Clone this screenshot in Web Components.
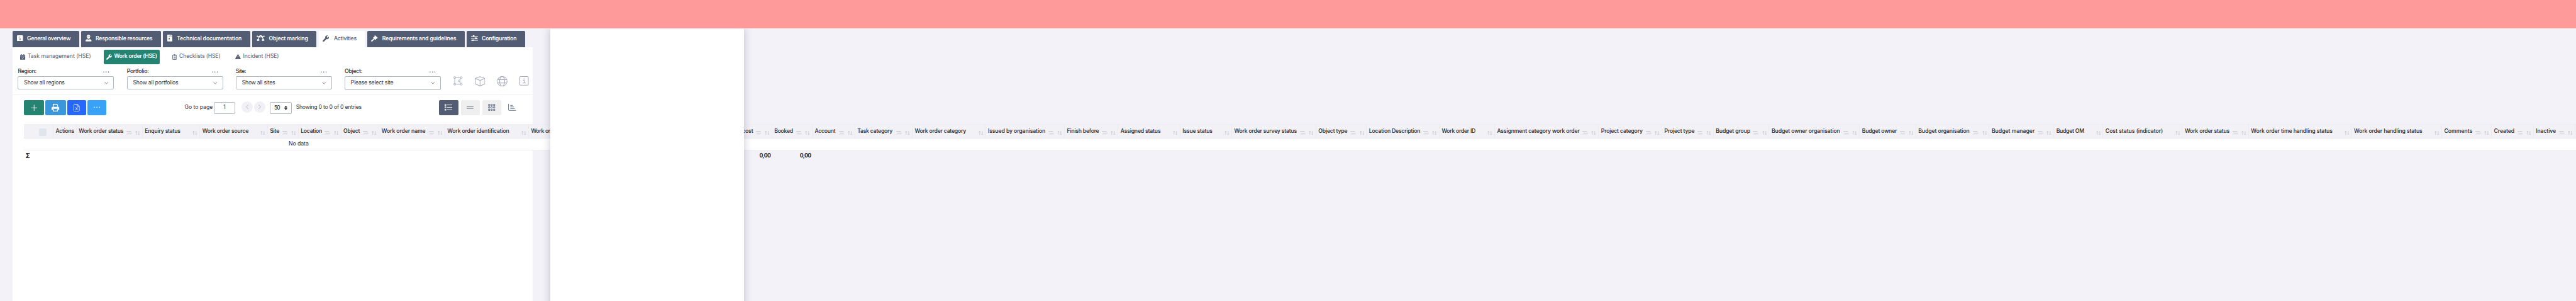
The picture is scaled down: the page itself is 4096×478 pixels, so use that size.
<!DOCTYPE html>
<html lang="en">
<head>
<meta charset="utf-8">
<title>Activities – Work order (HSE)</title>
<style>
html,body{margin:0;padding:0;background:#f3f2f8;overflow:hidden}
body{font-family:Inter,"Open Sans",sans-serif;height:478px;width:4096px}
</style>
</head>
<body>
<work-app></work-app>
<script>
const FONT = 'Inter, "Open Sans", sans-serif';
const ctx = document.createElement('canvas').getContext('2d');

/* Text set to an exact width by tracking. */
class FitText extends HTMLElement {
  connectedCallback() {
    const w = +this.getAttribute('w'), s = +(this.getAttribute('s') || 12.8), wt = this.getAttribute('wt') || 400;
    const t = this.textContent;
    ctx.font = `${wt} ${s}px ${FONT}`;
    const ls = (w - ctx.measureText(t).width) / t.length;
    this.attachShadow({mode: 'open'}).innerHTML =
      `<style>:host{display:block;flex:none;width:${w}px;white-space:nowrap;line-height:20px;font:${wt} ${s}px/20px ${FONT};letter-spacing:${ls.toFixed(3)}px}</style><slot></slot>`;
  }
}

const ICONS = {
  info: ['0 0 14 14', '<rect width="14" height="14" rx="2" fill="currentColor"/><path d="M5.6 6h1.8v4M5.3 10.2h3.6" stroke="#525c72" stroke-width="1.2" fill="none"/><circle cx="7" cy="3.7" r=".9" fill="#525c72"/>'],
  worker: ['0 0 14 16', '<path fill="currentColor" d="M3 4.2C3 2 4.5.6 5.6.5L6 2.6 6.3 0h1.4L8 2.6 8.4.5C9.600.6 11 2 11 4.200h.6v1H2.400v-1zM3.500 6h7c0 2.500-1.500 4-3.500 4S3.500 8.500 3.500 6zM4 10.600l3 1.200 3-1.200c2.500.3 4 2 4 4.400 0 .6-.3 1-1 1H1c-.7 0-1-.4-1-1 0-2.400 1.500-4.100 4-4.400z"/>'],
  zip: ['0 0 13 16', '<path fill="currentColor" d="M1.500 0H8v4.500h5v10c0 1-.5 1.500-1.500 1.500h-10C.5 16 0 15.500 0 14.500v-13C0 .5.500 0 1.500 0zM9 0l4 3.700H9z"/><path d="M4.500 1v6" stroke="#525c72" stroke-width="1.600" stroke-dasharray="1 1"/><rect x="3.300" y="7.500" width="2.400" height="5" rx="1.200" fill="#525c72"/><circle cx="4.500" cy="11" r=".8" fill="#fff"/>'],
  bezier: ['0 0 19 14', '<g fill="none" stroke="currentColor" stroke-width="1.700"><rect x="7.600" y=".9" width="3.800" height="3.200" rx=".6"/><rect x="1.900" y="9.700" width="3.600" height="3.400" rx=".6"/><rect x="13.500" y="9.700" width="3.600" height="3.400" rx=".6"/><path d="M2 2.300h5.600M11.400 2.300H17M7.600 3.300C5 4.400 3.700 6.500 3.700 9.700M11.400 3.300c2.600 1.100 3.900 3.200 3.900 6.400"/></g><circle cx="1.700" cy="2.300" r="1.600" fill="currentColor"/><circle cx="17.300" cy="2.300" r="1.600" fill="currentColor"/>'],
  wrench: ['0 0 512 512', '<path fill="currentColor" d="M507 116c-2-9-13-12-20-5l-74 74-68-11-11-68 74-74c7-7 4-18-6-20-52-13-110 1-151 42-43 43-55 106-37 161L19 410c-25 25-25 66 0 91s66 25 91 0l194-194c55 19 118 7 162-37 41-41 55-101 41-154z"/>'],
  gavel: ['0 0 16 16', '<path fill="currentColor" d="M8.200.6 9.200 0l6.600 6.300-.8 1.200-1-.1-2.800 2.800.2 1-1.100.8-2.400-2.300-5 5.600c-.6.7-1.400.7-2 .1l-.4-.4c-.5-.6-.5-1.300.1-1.900l5.600-5L4.600 6.300l.7-1.100h1L8.700 2z"/>'],
  sliders: ['0 0 16 14', '<g stroke="currentColor" stroke-width="1.700" fill="#525c72"><path d="M0 2.200h16M0 7h16M0 11.800h16"/><circle cx="6" cy="2.200" r="1.500"/><circle cx="11.300" cy="7" r="1.500"/><circle cx="5" cy="11.800" r="1.500"/></g>'],
  calendar: ['0 0 12 13', '<path fill="currentColor" d="M2.500 0h1.600v1.500h3.800V0h1.600v1.500H11c.7 0 1 .4 1 1V4H0V2.500c0-.6.300-1 1-1h1.500zM0 4.800h12V12c0 .6-.3 1-1 1H1c-.7 0-1-.4-1-1z"/><path d="m3.600 8.700 1.800 1.700 3.200-3.300" stroke="#fff" stroke-width="1.200" fill="none"/>'],
  clip: ['0 0 10 13', '<rect x=".6" y="1.800" width="8.800" height="10.600" rx="1" fill="none" stroke="currentColor" stroke-width="1.200"/><path fill="currentColor" d="M2.600 1.400h1.200a1.200 1.200 0 0 1 2.400 0h1.200v2.200H2.600z"/><path d="M2.300 6h1M4.300 6h3.500M2.300 8.200h1M4.300 8.200h3.500M2.300 10.400h1M4.300 10.400h3.500" stroke="currentColor"/>'],
  warn: ['0 0 13 12', '<path fill="currentColor" d="M5.600.6c.4-.8 1.400-.8 1.800 0l5.400 9.700c.4.800 0 1.700-.9 1.700H1.100c-.9 0-1.300-.9-.9-1.700z"/><path d="M6.500 3.500v4" stroke="#fff" stroke-width="1.300"/><circle cx="6.500" cy="9.500" r=".8" fill="#fff"/>'],
  dots: ['0 0 14 4', '<g fill="currentColor"><circle cx="1.400" cy="2" r="1.150"/><circle cx="7" cy="2" r="1.150"/><circle cx="12.600" cy="2" r="1.150"/></g>'],
  down: ['0 0 10 6', '<path d="m.8.8 4.200 4.200L9.200.8" fill="none" stroke="currentColor"/>'],
  poly: ['0 0 22 22', '<g fill="none" stroke="currentColor" stroke-width="1.400"><circle cx="3.200" cy="3.300" r="2.300"/><circle cx="18.800" cy="3.300" r="2.300"/><circle cx="3.200" cy="18.700" r="2.300"/><circle cx="18.800" cy="18.700" r="2.300"/><circle cx="14" cy="11" r="2.100"/><path d="M5.500 3.300h11M5.500 18.700h11M3.200 5.600v10.800M17.600 5.200 15 9M17.600 16.800 15 13"/></g>'],
  cube: ['0 0 25 24', '<g fill="none" stroke="currentColor" stroke-width="1.500" stroke-linejoin="round"><path d="M12.500 1 24 5.200v13L12.500 23 1 18.200v-13zM1 5.200 12.500 10 24 5.200M12.500 10v13"/></g>'],
  globe: ['0 0 25 24', '<g fill="none" stroke="currentColor" stroke-width="1.500"><ellipse cx="12.500" cy="12" rx="11.600" ry="11.200"/><ellipse cx="12.500" cy="12" rx="6" ry="11.200"/><path d="M2 8h21M2 16h21"/></g>'],
  infobox: ['0 0 22 22', '<g fill="none" stroke="currentColor" stroke-width="1.500"><rect x=".8" y=".8" width="20.400" height="20.400" rx="2"/><path d="M8.500 9.500h2.900v6.300M7.800 16h7"/></g><circle cx="11" cy="6.500" r="1.300" fill="currentColor"/>'],
  plus: ['0 0 16 16', '<path d="M8 .5v15M.5 8h15" stroke="currentColor" stroke-width="1.300"/>'],
  print: ['0 0 18 18', '<path d="M4 7V1h8.500L14 2.800V7" fill="none" stroke="currentColor" stroke-width="2"/><path fill="currentColor" d="M2.500 7h13c1.600 0 2.500 1 2.500 2.500V14h-3v-2.500H3V14H0V9.500C0 8 .9 7 2.500 7z"/><path d="M4 12v5h10v-5" fill="none" stroke="currentColor" stroke-width="2"/>'],
  xls: ['0 0 14 18', '<path d="M2.500.7H9l4.300 4.500v10.300c0 1.200-.6 1.800-1.800 1.800h-9C1.300 17.300.7 16.700.7 15.500v-13C.7 1.300 1.300.7 2.500.7zM8.700.7v4.800h4.600M4.700 8l4.600 6.500M9.300 8l-4.600 6.500" fill="none" stroke="currentColor" stroke-width="1.300"/>'],
  prev: ['0 0 6 11', '<path d="M5.300.7.800 5.500l4.500 4.800" fill="none" stroke="currentColor"/>'],
  next: ['0 0 6 11', '<path d="m.7.700 4.500 4.800-4.500 4.800" fill="none" stroke="currentColor"/>'],
  updown: ['0 0 8 10', '<path d="m0 4.200L4 0l4 4.200zM0 5.800 4 10l4-4.200z" fill="currentColor"/>'],
  list: ['0 0 18 16', '<g fill="none" stroke="currentColor" stroke-width="1.300"><path d="M5.500 2.400H18M5.500 8H18M5.500 13.600H18"/><rect x=".7" y="1.200" width="2.300" height="2.300"/><rect x=".7" y="6.900" width="2.300" height="2.300"/><rect x=".7" y="12.500" width="2.300" height="2.300"/></g>'],
  equal: ['0 0 16 7', '<path d="M0 1h16M0 6h16" stroke="currentColor" stroke-width="1.200"/>'],
  grid: ['0 0 17 16', '<g fill="none" stroke="currentColor" stroke-width="1.400">' + [1, 6.9, 12.8].map(x => [.8, 6.4, 12].map(y => `<rect x="${x}" y="${y}" width="3.200" height="3.200" rx=".8"/>`).join('')).join('') + '</g>'],
  chart: ['0 0 19 16', '<path d="M.8 0v13.500c0 1.200.5 1.700 1.700 1.700H19M5 3.400h6.500M5 7h8.500M5 10.800h11" fill="none" stroke="currentColor" stroke-width="1.200"/>'],
  filter: ['0 0 13 11', '<path d="M0 .8h11M2 5.500h11M0 10.200h12" stroke="currentColor" stroke-width="1.100"/>'],
  sort: ['0 0 11 11', '<path d="M2.700 11V.7M.4 3 2.700.6 5 3M8.600 0v10.300M6.300 8l2.300 2.400L10.900 8" fill="none" stroke="currentColor" stroke-width="1"/>']
};

class UiIcon extends HTMLElement {
  connectedCallback() {
    const [box, art] = ICONS[this.getAttribute('n')];
    const w = this.getAttribute('w'), h = this.getAttribute('h');
    this.attachShadow({mode: 'open'}).innerHTML =
      `<style>:host{display:block;flex:none;width:${w}px;height:${h}px}svg{display:block;width:100%;height:100%}</style><svg viewBox="${box}" preserveAspectRatio="none">${art}</svg>`;
  }
}

class MainTabs extends HTMLElement {
  connectedCallback() {
    const tabs = [['General overview','info',14,14,156,102.2,10,9.6],['Responsible resources','worker',14,16,187,133.5,10,9.7],['Technical documentation','zip',13,16,204.5,152.3,9.5,10],['Object marking','bezier',19,14,151,92.3,10,10],['Activities','wrench',15,15,109,53.2,10,11],['Requirements and guidelines','gavel',16,15,229,174,10,9.5],['Configuration','sliders',16,14,137.500,82,10,9.5]];
    this.attachShadow({mode: 'open'}).innerHTML = `<style>
      :host{display:flex;gap:4.700px;height:38px;padding:5px 0 0 30px}
      div{display:flex;align-items:center;height:38px;box-sizing:border-box;background:#525c72;color:#fff;border-radius:3px 3px 0 0}
      div.on{background:#fff;color:#525c72}
      ui-icon{margin-bottom:3px}
    </style>` + tabs.map(t => `<div class="${t[0] == 'Activities' ? 'on' : ''}" style="width:${t[4]}px;padding-left:${t[6]}px;gap:${t[7]}px"><ui-icon n="${t[1]}" w="${t[2]}" h="${t[3]}"></ui-icon><fit-text w="${t[5]}" wt="${t[0] == 'Activities' ? 500 : 600}">${t[0]}</fit-text></div>`).join('');
  }
}

class SubTabs extends HTMLElement {
  connectedCallback() {
    this.attachShadow({mode: 'open'}).innerHTML = `<style>
      :host{display:flex;padding:6px 0 0 13.300px;height:34px;color:#525c72}
      div{display:flex;align-items:center;height:34px;box-sizing:border-box;border-radius:3px;padding-left:4.500px;gap:5px}
      .on{background:#258372;color:#fff;padding-left:6.500px}
    </style>
    <div style="width:200px"><ui-icon n="calendar" w="12" h="13"></ui-icon><fit-text w="149">Task management (HSE)</fit-text></div>
    <div class="on" style="width:132px"><ui-icon n="wrench" w="13" h="13"></ui-icon><fit-text w="100.600" wt="600">Work order (HSE)</fit-text></div>
    <div style="width:172.500px;padding-left:29px;gap:5.700px;box-sizing:border-box"><ui-icon n="clip" w="10.600" h="13"></ui-icon><fit-text w="96.500">Checklists (HSE)</fit-text></div>
    <div><ui-icon n="warn" w="13" h="12"></ui-icon><fit-text w="84">Incident (HSE)</fit-text></div>`;
  }
}

class FilterBox extends HTMLElement {
  connectedCallback() {
    const a = n => this.getAttribute(n);
    this.attachShadow({mode: 'open'}).innerHTML = `<style>
      :host{display:block;width:225.500px;color:#30343c}
      .l,.b{display:flex;justify-content:space-between;align-items:center}
      .l{height:20px;padding-right:12px;margin-bottom:1px;color:#24282e}
      .l ui-icon{color:#525c72;margin-top:2px}
      .b{height:${a('h') || 31}px;box-sizing:border-box;border:1px solid #b1b8c6;border-radius:3px;padding:0 12px 0 13px}
      .b fit-text{margin-top:${a('h') ? 0 : 1}px}
    </style><div class="l"><fit-text w="${a('lw')}" wt="500">${a('label')}</fit-text><ui-icon n="dots" w="14" h="4"></ui-icon></div>
    <div class="b"><fit-text w="${a('vw')}">${a('value')}</fit-text><ui-icon n="down" w="9.500" h="5.500"></ui-icon></div>`;
  }
}

class FilterBar extends HTMLElement {
  connectedCallback() {
    this.attachShadow({mode: 'open'}).innerHTML = `<style>
      :host{display:flex;gap:30px;height:73px;box-sizing:border-box;padding:8px 0 0 12px;border-bottom:1.500px solid #f3f2f6}
      .i{display:flex;align-items:center;color:#a9a9c0;height:24px;margin-top:20px;gap:28px}
    </style>
    <filter-box label="Region:" lw="43.500" value="Show all regions" vw="95.300"></filter-box>
    <filter-box label="Portfolio:" lw="51.500" value="Show all portfolios" vw="106.500"></filter-box>
    <filter-box label="Site:" lw="24.400" value="Show all sites" vw="78"></filter-box>
    <filter-box label="Object:" lw="41.700" value="Please select site" vw="100" h="32"></filter-box>
    <div class="i"><ui-icon n="poly" w="21.500" h="22"></ui-icon><ui-icon n="cube" w="24.500" h="24"></ui-icon><ui-icon n="globe" w="25" h="24"></ui-icon><ui-icon n="infobox" w="21.500" h="22"></ui-icon></div>`;
  }
}

class ToolBar extends HTMLElement {
  connectedCallback() {
    this.attachShadow({mode: 'open'}).innerHTML = `<style>
      :host{display:flex;height:68px;box-sizing:border-box;padding:11px 0 0 26px;color:#30343c}
      .r{display:flex;height:36px;align-items:center}
      .b{display:flex;align-items:center;justify-content:center;height:36px;border-radius:3px;color:#fff}
      .a{gap:2.700px;width:377px}
      .box{display:flex;align-items:center;justify-content:center;box-sizing:border-box;border:1px solid #b1b8c6;border-radius:3px;height:28px}
      .c{display:flex;align-items:center;justify-content:center;width:26.500px;height:26.500px;border-radius:50%;background:#f1f0f6;color:#9c9cab;margin-right:3.500px;margin-top:-1px}
      .g{background:#efeff0;color:#525c72}
      .c ui-icon{margin-top:-3px}
    </style>
    <div class="r a"><div class="b" style="width:47px;background:#258372"><ui-icon n="plus" w="15.500" h="15.500"></ui-icon></div>
      <div class="b" style="width:49.500px;background:#3a97db"><ui-icon n="print" w="18" h="18"></ui-icon></div>
      <div class="b" style="width:44.700px;background:#2667ff"><ui-icon n="xls" w="14" h="18"></ui-icon></div>
      <div class="b" style="width:44px;background:#38a1f8"><ui-icon n="dots" w="15" h="4"></ui-icon></div></div>
    <div class="r" style="width:596px"><fit-text w="66">Go to page</fit-text>
      <div class="box" style="width:50px;margin:2px 14.500px 0 3px;padding-bottom:3px"><fit-text w="6" s="12.500">1</fit-text></div>
      <div class="c"><ui-icon n="prev" w="6" h="11"></ui-icon></div><div class="c"><ui-icon n="next" w="6" h="11"></ui-icon></div>
      <div class="box" style="width:51px;margin:3px 10px 0 7px;gap:11px;color:#222"><fit-text w="13" s="12.500">50</fit-text><ui-icon n="updown" w="7.500" h="10"></ui-icon></div>
      <fit-text w="154">Showing 0 to 0 of 0 entries</fit-text></div>
    <div class="r"><div class="b" style="width:46.300px;background:#525c72"><ui-icon n="list" w="18" h="16"></ui-icon></div>
      <div class="b g" style="width:44px;margin:0 6px"><ui-icon n="equal" w="16" h="6.500"></ui-icon></div>
      <div class="b g" style="width:44px;margin-right:17px"><ui-icon n="grid" w="17" h="16.500"></ui-icon></div>
      <ui-icon n="chart" w="18.500" h="16" style="color:#525c72"></ui-icon></div>`;
  }
}

class DataTable extends HTMLElement {
  connectedCallback() {
    /* label, text width, right edge of the column, has a filter icon */
    const cols = [['Work order status',104.8,334.6,1],['Enquiry status',83.5,469.3,0],['Work order source',108.6,628,0],['Site',22,700.2,1],['Location',50,800.4,1],['Object',38.7,890,1],['Work order name',103.1,1044,1],['Work order identification',145.6,1240.6,0],['Work order type',92,1400,1],['',0,1735.8,0],['cost',25.6,1811.2,1],['Booked',43.6,1905.9,1],['Account',48.8,2005.8,1],['Task category',82.7,2140.6,1],['Work order category',120.5,2312.3,0],['Issued by organisation',135,2497.7,1],['Finish before',75.2,2623.4,1],['Assigned status',94,2768.8,0],['Issue status',70,2889.9,0],['Work order survey status',147,3087.3,1],['Object type',68.3,3206.2,1],['Location Description',120.5,3376.6,1],['Work order ID',79.2,3506.5,0],['Assignment category work order',194,3750.4,1],['Project category',97.6,3899.1,1],['Project type',70.6,4019.6,1],['Budget group',81,4150.5,1],['Budget owner organisation',160.7,4362.5,1],['Budget owner',82,4494.5,1],['Budget organisation',120.5,4666.7,1],['Budget manager',101,4818.2,1],['Budget OM',65.4,4933.6,0],['Cost status (indicator)',135,5119.6,0],['Work order status',105,5275.1,1],['Work order time handling status',199.3-8,5516.5,0],['Work order handling status',160.5,5728.1,0],['Comments',66.5,5844.7,1],['Created',48.4,5943.1,1],['Inactive',47.3,6041,1]];
    let prev = 179.7;
    const head = cols.map(([t, w, r, f]) => {
      const cw = (r - prev).toFixed(2); prev = r;
      return `<div class="h" style="width:${cw}px">${t ? `<fit-text w="${w}" wt="500">${t}</fit-text><span></span>${f ? '<ui-icon n="filter" w="13" h="10"></ui-icon>' : ''}<ui-icon n="sort" w="11" h="10"></ui-icon>` : ''}</div>`;
    }).join('');
    this.attachShadow({mode: 'open'}).innerHTML = `<style>
      :host{display:block;width:5986px;margin-left:26px;color:#1f2328}
      .head{display:flex;height:33.700px;box-sizing:border-box;background:#f2f1f6;border-top:1px solid #eeedf3;border-bottom:1.600px solid #e9e8f0}
      .h{display:flex;flex:none;box-sizing:border-box;border-right:1px solid #ebeaf1;padding:5.500px 5px 0 5.200px}
      .h span{flex:1}
      .h ui-icon{color:#b9b9c4;margin-top:8.500px}
      .h ui-icon[n=filter]{margin-right:8px}
      .ck{width:17.500px;height:18px;border-radius:3px;background:#e0e4ec;margin:3px 0 0 30px}
      .row{background:#fff;height:27.500px;box-sizing:border-box;border-bottom:1px solid #eeedf3;padding:3.300px 0 0 621px}
      .sum{display:flex;height:26px;align-items:center;padding-left:4px}
    </style>
    <div class="head"><div class="h" style="width:69.400px"><div class="ck"></div></div><div class="h" style="width:54.300px"><fit-text w="43.300" wt="500">Actions</fit-text></div>${head}</div>
    <div class="row"><fit-text w="47">No data</fit-text></div>
    <div class="sum"><fit-text w="11" s="15" wt="700">Σ</fit-text><fit-text w="26.300" wt="700" style="margin-left:1710.300px">0,00</fit-text><fit-text w="26.300" wt="700" style="margin-left:68.400px">0,00</fit-text></div>`;
  }
}

class WorkApp extends HTMLElement {
  connectedCallback() {
    this.attachShadow({mode: 'open'}).innerHTML = `<style>
      :host{display:block;position:relative;zoom:.67792;width:6043px;height:706px;overflow:hidden;background:#f3f2f8;font-size:12.800px}
      header{height:67px;background:#ff9a9a}
      main{width:1220px;height:600px;margin-left:30px;background:#fff}
      aside{position:absolute;left:1290px;top:67px;width:455px;height:700px;background:#fff;box-shadow:0 0 18px rgba(70,70,110,.3);clip-path:inset(0 -40px)}
    </style>
    <header></header><main-tabs></main-tabs>
    <main><sub-tabs></sub-tabs><filter-bar></filter-bar><tool-bar></tool-bar><data-table></data-table></main>
    <aside></aside>`;
  }
}

Object.entries({'fit-text': FitText, 'ui-icon': UiIcon, 'main-tabs': MainTabs, 'sub-tabs': SubTabs, 'filter-box': FilterBox, 'filter-bar': FilterBar, 'tool-bar': ToolBar, 'data-table': DataTable, 'work-app': WorkApp})
  .forEach(([n, c]) => customElements.define(n, c));
</script>
</body>
</html>
